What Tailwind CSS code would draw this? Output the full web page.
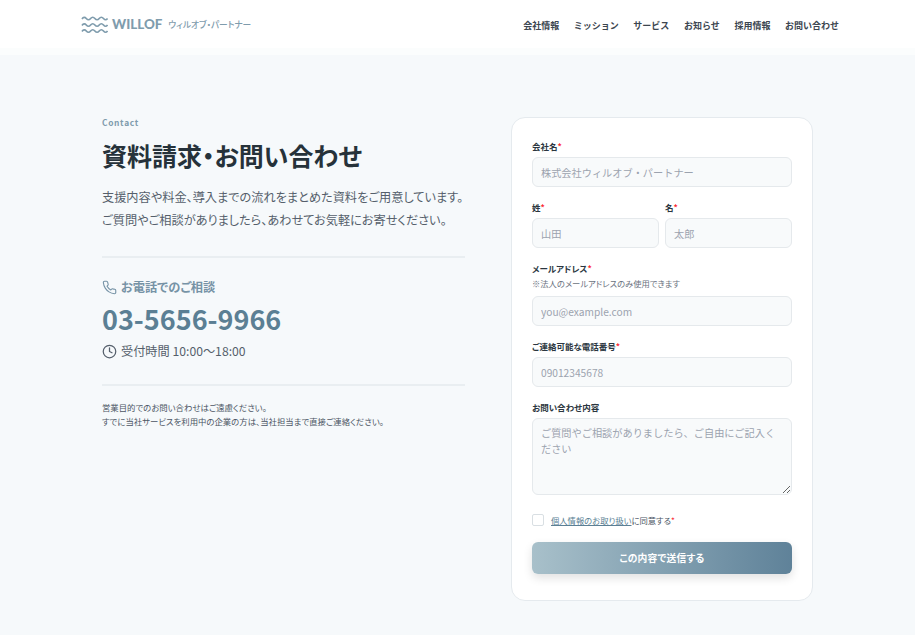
<!DOCTYPE html>
<html lang="ja">
<head>
<meta charset="utf-8">
<script src="https://cdn.jsdelivr.net/npm/@tailwindcss/browser@4"></script>
</head>
<body class="bg-[#f6f9fb] text-[#374151] font-['Noto_Sans_CJK_JP','Noto_Sans',sans-serif] [font-feature-settings:'palt'] overflow-hidden">
<header class="h-[48px] bg-white shadow-[0_7px_0_rgba(255,255,255,0.6)] flex items-center justify-between pl-[81px] pr-[76px]">
  <div class="flex items-center pt-[1px]">
    <svg class="w-[27px] h-[18px] text-[#7f9cad]" viewBox="0 0 27 18" fill="none" stroke="currentColor" stroke-width="1.7">
      <path d="M1 3 Q3.1 0 5.3 2.5 T9.6 2.5 T13.9 2.5 T18.2 2.5 T22.5 2.5 T26.5 2.5"/>
      <path d="M1 9.5 Q3.1 6.5 5.3 9 T9.6 9 T13.9 9 T18.2 9 T22.5 9 T26.5 9"/>
      <path d="M1 15.5 Q3.1 12.5 5.3 15 T9.6 15 T13.9 15 T18.2 15 T22.5 15 T26.5 15"/>
    </svg>
    <span class="ml-[4px] font-['Lato'] font-black text-[13.4px] leading-none text-[#7f9cad]">WILLOF</span>
    <span class="ml-[6px] text-[8.7px] font-medium text-[#7f9cad]">ウィルオブ・パートナー</span>
  </div>
  <nav class="flex gap-[14.6px] pt-[3px] text-[9px] font-bold text-[#3c4650] [font-feature-settings:normal]">
    <a>会社情報</a><a>ミッション</a><a>サービス</a><a>お知らせ</a><a>採用情報</a><a>お問い合わせ</a>
  </nav>
</header>
<main class="flex gap-[46px] pl-[102px] pt-[69px]">
  <section class="w-[363px]">
    <p class="text-[8.4px] leading-[11px] font-bold tracking-[0.08em] text-[#7f9cad]">Contact</p>
    <h1 class="mt-[7px] text-[25px] leading-[40px] font-bold text-[#26323a]">資料請求・お問い合わせ</h1>
    <p class="mt-[11px] text-[12.2px] leading-[23px] text-[#555f6b] whitespace-nowrap">支援内容や料金、導入までの流れをまとめた資料をご用意しています。<br>ご質問やご相談がありましたら、あわせてお気軽にお寄せください。</p>
    <div class="mt-[24px] border-y-2 border-[#e9eef1] pt-[20px] pb-[24px]">
      <div class="flex items-center gap-[4px] text-[#7693a6]">
        <svg class="w-[15px] h-[15px]" viewBox="0 0 24 24" fill="none" stroke="currentColor" stroke-width="1.8" stroke-linecap="round" stroke-linejoin="round"><path d="M22 17v3a2 2 0 0 1-2.2 2 19.8 19.8 0 0 1-8.6-3 19.5 19.5 0 0 1-6-6 19.8 19.8 0 0 1-3-8.7A2 2 0 0 1 4.1 2h3a2 2 0 0 1 2 1.7c.1 1 .4 1.9.7 2.8a2 2 0 0 1-.5 2.1L8.1 9.9a16 16 0 0 0 6 6l1.3-1.3a2 2 0 0 1 2.1-.4c.9.3 1.8.6 2.8.7a2 2 0 0 1 1.7 2z"/></svg>
        <span class="text-[12.2px] leading-[18px] font-bold">お電話でのご相談</span>
      </div>
      <p class="mt-[3px] text-[27px] leading-[40px] font-bold text-[#5b7f94]">03-5656-9966</p>
      <div class="mt-[3px] flex items-center gap-[4px] text-[#555f6b]">
        <svg class="w-[15px] h-[15px]" viewBox="0 0 24 24" fill="none" stroke="currentColor" stroke-width="2" stroke-linecap="round" stroke-linejoin="round"><circle cx="12" cy="12" r="10"/><path d="M12 6v6l4 2"/></svg>
        <span class="text-[12.2px] leading-[18px]">受付時間 10:00〜18:00</span>
      </div>
    </div>
    <p class="mt-[14px] text-[8.4px] leading-[14px] text-[#4b5563] whitespace-nowrap">営業目的でのお問い合わせはご遠慮ください。<br>すでに当社サービスを利用中の企業の方は、当社担当まで直接ご連絡ください。</p>
  </section>
  <form class="w-[302px] h-[484px] bg-white border border-[#e5eaee] rounded-[14px] px-[20px] pt-[21px] flex flex-col">
    <label class="text-[8.5px] leading-[14px] font-bold text-[#2b3640]">会社名<span class="text-red-500">*</span></label>
    <input class="mt-[4px] h-[30px] w-full rounded-[6px] border border-[#e5e9ec] bg-[#f8fafb] px-[8px] text-[10.2px] [font-feature-settings:normal] placeholder:text-[#9ca3af]" placeholder="株式会社ウィルオブ・パートナー">
    <div class="mt-[13px] grid grid-cols-2 gap-[6px]">
      <div>
        <label class="block text-[8.5px] leading-[14px] font-bold text-[#2b3640]">姓<span class="text-red-500">*</span></label>
        <input class="mt-[4px] h-[30px] w-full rounded-[6px] border border-[#e5e9ec] bg-[#f8fafb] px-[8px] text-[10.2px] [font-feature-settings:normal] placeholder:text-[#9ca3af]" placeholder="山田">
      </div>
      <div>
        <label class="block text-[8.5px] leading-[14px] font-bold text-[#2b3640]">名<span class="text-red-500">*</span></label>
        <input class="mt-[4px] h-[30px] w-full rounded-[6px] border border-[#e5e9ec] bg-[#f8fafb] px-[8px] text-[10.2px] [font-feature-settings:normal] placeholder:text-[#9ca3af]" placeholder="太郎">
      </div>
    </div>
    <label class="mt-[13px] text-[8.5px] leading-[14px] font-bold text-[#2b3640]">メールアドレス<span class="text-red-500">*</span></label>
    <p class="mt-[1px] text-[8.3px] leading-[14px] text-[#6b7280]">※法人のメールアドレスのみ使用できます</p>
    <input class="mt-[6px] h-[30px] w-full rounded-[6px] border border-[#e5e9ec] bg-[#f8fafb] px-[8px] text-[10.2px] [font-feature-settings:normal] placeholder:text-[#9ca3af]" placeholder="you@example.com">
    <label class="mt-[13px] text-[8.5px] leading-[14px] font-bold text-[#2b3640]">ご連絡可能な電話番号<span class="text-red-500">*</span></label>
    <input class="mt-[4px] h-[30px] w-full rounded-[6px] border border-[#e5e9ec] bg-[#f8fafb] px-[8px] text-[10.2px] [font-feature-settings:normal] placeholder:text-[#9ca3af]" placeholder="09012345678">
    <label class="mt-[13px] text-[8.5px] leading-[14px] font-bold text-[#2b3640]">お問い合わせ内容</label>
    <textarea class="mt-[4px] h-[77px] w-full rounded-[6px] border border-[#e5e9ec] bg-[#f8fafb] px-[8px] py-[6px] text-[10.2px] leading-[16px] [font-feature-settings:normal] placeholder:text-[#9ca3af]" placeholder="ご質問やご相談がありましたら、ご自由にご記入ください"></textarea>
    <div class="mt-[18px] flex items-center gap-[7px]">
      <span class="w-[12px] h-[12px] rounded-[2px] border border-[#d9dfe3] bg-white"></span>
      <span class="text-[8.3px] leading-[14px] text-[#4b5563]"><a class="underline text-[#5b7f94]">個人情報のお取り扱い</a>に同意する<span class="text-red-500">*</span></span>
    </div>
    <button type="button" class="mt-[15px] h-[32px] w-full rounded-[6px] bg-gradient-to-r from-[#a8c0ca] to-[#5f8299] text-white text-[9.75px] font-bold tracking-[0.02em] shadow-[0_4px_10px_rgba(0,0,0,0.12)]">この内容で送信する</button>
  </form>
</main>
</body>
</html>
